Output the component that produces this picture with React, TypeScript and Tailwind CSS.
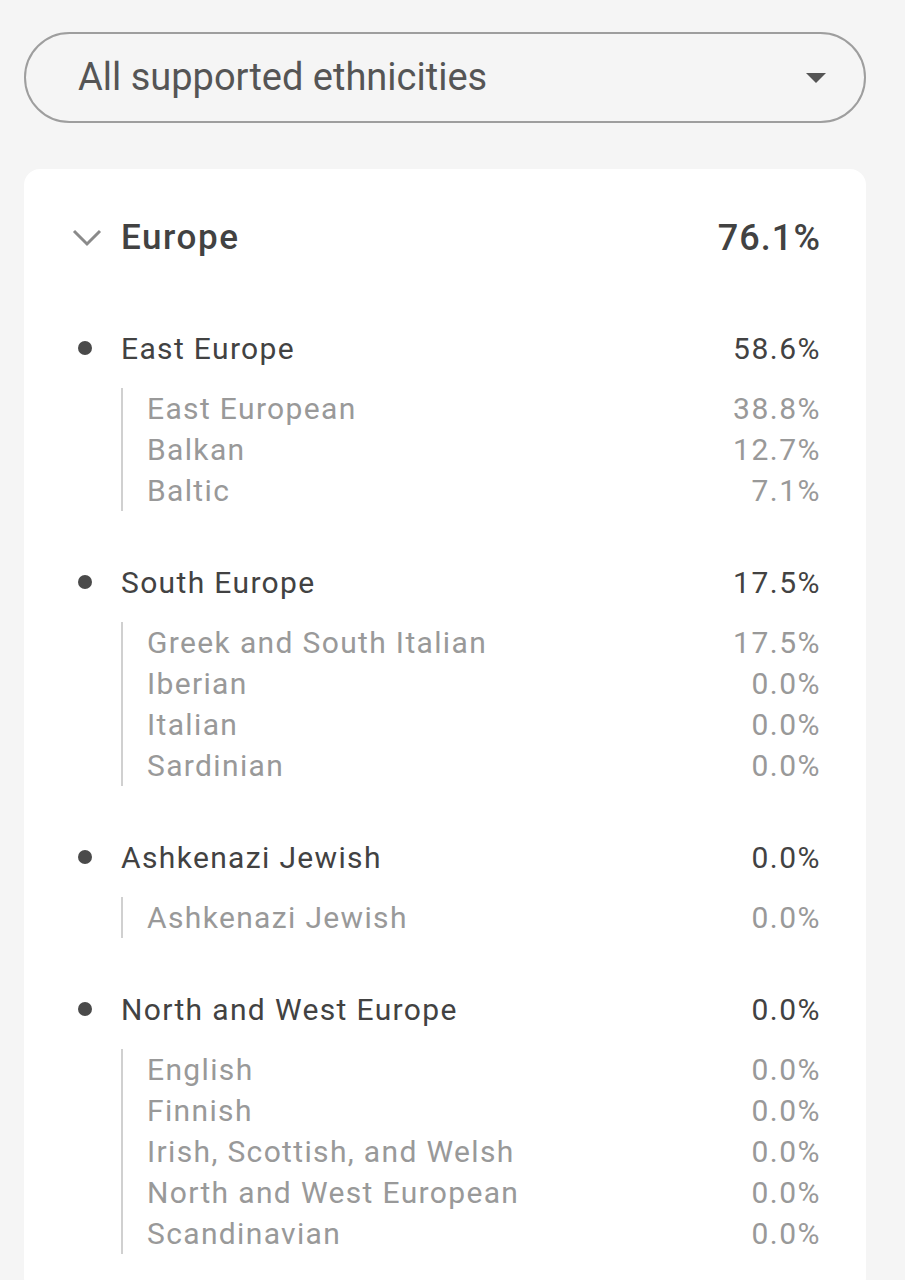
import React from 'react';

type Sub = { name: string; value: string };
type Group = { name: string; value: string; items: Sub[] };

const groups: Group[] = [
  {
    name: 'East Europe',
    value: '58.6%',
    items: [
      { name: 'East European', value: '38.8%' },
      { name: 'Balkan', value: '12.7%' },
      { name: 'Baltic', value: '7.1%' },
    ],
  },
  {
    name: 'South Europe',
    value: '17.5%',
    items: [
      { name: 'Greek and South Italian', value: '17.5%' },
      { name: 'Iberian', value: '0.0%' },
      { name: 'Italian', value: '0.0%' },
      { name: 'Sardinian', value: '0.0%' },
    ],
  },
  {
    name: 'Ashkenazi Jewish',
    value: '0.0%',
    items: [{ name: 'Ashkenazi Jewish', value: '0.0%' }],
  },
  {
    name: 'North and West Europe',
    value: '0.0%',
    items: [
      { name: 'English', value: '0.0%' },
      { name: 'Finnish', value: '0.0%' },
      { name: 'Irish, Scottish, and Welsh', value: '0.0%' },
      { name: 'North and West European', value: '0.0%' },
      { name: 'Scandinavian', value: '0.0%' },
    ],
  },
];

const App = () => {
  return (
    <div className="min-h-[1280px] bg-[#f5f5f5] pl-6 pr-[39px] pt-8 font-['Roboto',sans-serif]">
      {/* Dropdown */}
      <div className="flex h-[91px] items-center justify-between rounded-full border-2 border-[#9e9e9e] pl-[52px] pr-[38px]">
        <span className="text-[38px] text-[#555555]">All supported ethnicities</span>
        <svg width="20" height="10" viewBox="0 0 20 10">
          <polygon points="0,0 20,0 10,10" fill="#555555" />
        </svg>
      </div>

      {/* Card */}
      <div className="mt-[46px] rounded-2xl bg-white pl-12 pr-[46px] pt-[45px] pb-10">
        <div className="flex h-12 items-center justify-between">
          <div className="flex items-center">
            <svg width="30" height="18" viewBox="0 0 30 18" className="mr-[19px]">
              <polyline points="2,2 15,15 28,2" fill="none" stroke="#8a8a8a" strokeWidth="3" />
            </svg>
            <span className="text-[35px] font-medium tracking-[0.045em] text-[#424242]">Europe</span>
          </div>
          <span className="-mr-[1px] text-[36px] font-medium tracking-[0.03em] text-[#424242]">76.1%</span>
        </div>

        <div className="mt-[66px] flex flex-col gap-[51px]">
          {groups.map((g) => (
            <div key={g.name}>
              <div className="flex h-10 items-center justify-between">
                <div className="flex items-center">
                  <span className="ml-[6px] mr-[29px] h-[14px] w-[14px] rounded-full bg-[#4a4a4a]" />
                  <span className="text-[30px] tracking-[0.045em] text-[#424242]">{g.name}</span>
                </div>
                <span className="-mr-[1px] text-[30px] tracking-[0.05em] text-[#424242]">{g.value}</span>
              </div>
              <div className="ml-[49px] mt-5 border-l-2 border-[#d0d0d0] pl-6">
                {g.items.map((s) => (
                  <div key={s.name} className="flex h-[41px] items-center justify-between">
                    <span className="text-[30px] tracking-[0.045em] text-[#999999]">{s.name}</span>
                    <span className="-mr-[1px] text-[30px] tracking-[0.05em] text-[#999999]">{s.value}</span>
                  </div>
                ))}
              </div>
            </div>
          ))}
        </div>
      </div>
    </div>
  );
};

export default App;
